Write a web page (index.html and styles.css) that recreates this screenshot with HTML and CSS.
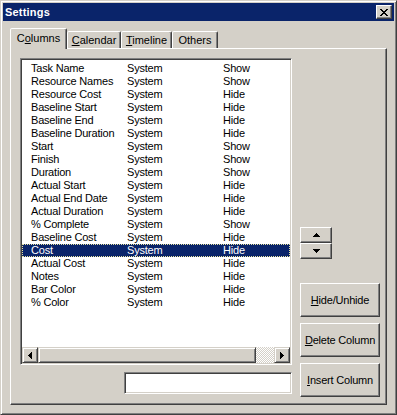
FILE: index.html
```html
<!DOCTYPE html>
<html>
<head>
<meta charset="utf-8">
<link rel="stylesheet" href="styles.css">
</head>
<body>
<div class="window">
  <div class="titlebar">
    <span class="title">Settings</span>
    <div class="close">
      <svg width="8" height="7" viewBox="0 0 8 7" shape-rendering="crispEdges">
        <rect x="0" y="0" width="2" height="1"/><rect x="6" y="0" width="2" height="1"/>
        <rect x="1" y="1" width="2" height="1"/><rect x="5" y="1" width="2" height="1"/>
        <rect x="2" y="2" width="4" height="1"/>
        <rect x="3" y="3" width="2" height="1"/>
        <rect x="2" y="4" width="4" height="1"/>
        <rect x="1" y="5" width="2" height="1"/><rect x="5" y="5" width="2" height="1"/>
        <rect x="0" y="6" width="2" height="1"/><rect x="6" y="6" width="2" height="1"/>
      </svg>
    </div>
  </div>
  <div class="body">
    <div class="tabs">
      <div class="tab tab-active tab-columns">C<u>o</u>lumns</div>
      <div class="tab tab-calendar"><u>C</u>alendar</div>
      <div class="tab tab-timeline"><u>T</u>imeline</div>
      <div class="tab tab-others">Others</div>
    </div>
    <div class="panel">
      <div class="left">
        <div class="list">
          <div class="rows">
            <div class="row"><span>Task Name</span><span>System</span><span>Show</span></div>
            <div class="row"><span>Resource Names</span><span>System</span><span>Show</span></div>
            <div class="row"><span>Resource Cost</span><span>System</span><span>Hide</span></div>
            <div class="row"><span>Baseline Start</span><span>System</span><span>Hide</span></div>
            <div class="row"><span>Baseline End</span><span>System</span><span>Hide</span></div>
            <div class="row"><span>Baseline Duration</span><span>System</span><span>Hide</span></div>
            <div class="row"><span>Start</span><span>System</span><span>Show</span></div>
            <div class="row"><span>Finish</span><span>System</span><span>Show</span></div>
            <div class="row"><span>Duration</span><span>System</span><span>Show</span></div>
            <div class="row"><span>Actual Start</span><span>System</span><span>Hide</span></div>
            <div class="row"><span>Actual End Date</span><span>System</span><span>Hide</span></div>
            <div class="row"><span>Actual Duration</span><span>System</span><span>Hide</span></div>
            <div class="row"><span>% Complete</span><span>System</span><span>Show</span></div>
            <div class="row"><span>Baseline Cost</span><span>System</span><span>Hide</span></div>
            <div class="row row-selected"><span>Cost</span><span>System</span><span>Hide</span></div>
            <div class="row"><span>Actual Cost</span><span>System</span><span>Hide</span></div>
            <div class="row"><span>Notes</span><span>System</span><span>Hide</span></div>
            <div class="row"><span>Bar Color</span><span>System</span><span>Hide</span></div>
            <div class="row"><span>% Color</span><span>System</span><span>Hide</span></div>
          </div>
          <div class="hscroll">
            <div class="sbtn">
              <svg width="4" height="7" viewBox="0 0 4 7" shape-rendering="crispEdges">
                <rect x="0" y="3" width="1" height="1"/><rect x="1" y="2" width="1" height="3"/>
                <rect x="2" y="1" width="1" height="5"/><rect x="3" y="0" width="1" height="7"/>
              </svg>
            </div>
            <div class="thumb"></div>
            <div class="track"></div>
            <div class="sbtn">
              <svg width="4" height="7" viewBox="0 0 4 7" shape-rendering="crispEdges">
                <rect x="3" y="3" width="1" height="1"/><rect x="2" y="2" width="1" height="3"/>
                <rect x="1" y="1" width="1" height="5"/><rect x="0" y="0" width="1" height="7"/>
              </svg>
            </div>
          </div>
        </div>
        <div class="textbox"></div>
      </div>
      <div class="right">
        <div class="updown">
          <div class="btn small">
            <svg width="7" height="4" viewBox="0 0 7 4" shape-rendering="crispEdges">
              <rect x="3" y="0" width="1" height="1"/><rect x="2" y="1" width="3" height="1"/>
              <rect x="1" y="2" width="5" height="1"/><rect x="0" y="3" width="7" height="1"/>
            </svg>
          </div>
          <div class="btn small">
            <svg width="7" height="4" viewBox="0 0 7 4" shape-rendering="crispEdges">
              <rect x="0" y="0" width="7" height="1"/><rect x="1" y="1" width="5" height="1"/>
              <rect x="2" y="2" width="3" height="1"/><rect x="3" y="3" width="1" height="1"/>
            </svg>
          </div>
        </div>
        <div class="btn big first"><span><u>H</u>ide/Unhide</span></div>
        <div class="btn big"><span><u>D</u>elete Column</span></div>
        <div class="btn big"><span><u>I</u>nsert Column</span></div>
      </div>
    </div>
  </div>
</div>
</body>
</html>
```
FILE: styles.css
```css
* { box-sizing: border-box; }
html, body { margin: 0; padding: 0; background: #d4d0c8; }
body {
  font-family: "Liberation Sans", Arial, sans-serif;
  font-size: 11px;
  color: #000;
}
u { text-decoration: underline; text-underline-offset: 1px; }

.window {
  width: 397px;
  height: 415px;
  background: #d4d0c8;
  border: 1px solid;
  border-color: #d4d0c8 #404040 #404040 #d4d0c8;
  box-shadow: inset 1px 1px #fff, inset -1px -1px #808080;
  padding: 2px;
  display: flex;
  flex-direction: column;
}

.titlebar {
  height: 18px;
  background: #0a246a;
  display: flex;
  align-items: center;
  justify-content: space-between;
  padding: 0 2px 0 2px;
  flex: none;
}
.title {
  color: #fff;
  font-weight: bold;
  font-size: 11px;
  letter-spacing: 0.2px;
}
.close {
  width: 16px;
  height: 14px;
  background: #d4d0c8;
  border: 1px solid;
  border-color: #fff #404040 #404040 #fff;
  box-shadow: inset -1px -1px #808080;
  display: flex;
  align-items: center;
  justify-content: center;
  padding-right: 1px;
}
.close svg { display: block; fill: #000; }

.body {
  flex: 1;
  padding: 7px;
  display: flex;
  flex-direction: column;
}

.tabs {
  height: 20px;
  display: flex;
  align-items: flex-end;
  flex: none;
}
.tab {
  height: 17px;
  border: 1px solid;
  border-bottom: none;
  border-color: #fff #404040 transparent #fff;
  box-shadow: inset -1px 0 #808080;
  border-radius: 2px 2px 0 0;
  background: #d4d0c8;
  padding-top: 2px;
  line-height: 13px;
  text-align: center;
  white-space: nowrap;
}
.tab-active {
  height: 21px;
  margin-bottom: -1px;
  position: relative;
  z-index: 1;
  padding-top: 3px;
}
.tab-columns { width: 57px; }
.tab-calendar { width: 54px; }
.tab-timeline { width: 51px; }
.tab-others { width: 46px; }

.panel {
  flex: 1;
  border: 1px solid;
  border-color: #fff #404040 #404040 #fff;
  box-shadow: inset -1px -1px #808080;
  padding: 9px 6px 0 9px;
  display: flex;
  gap: 8px;
}

.left {
  width: 272px;
  display: flex;
  flex-direction: column;
}
.list {
  height: 307px;
  background: #fff;
  border: 1px solid;
  border-color: #808080 #fff #fff #808080;
  box-shadow: inset 1px 1px #404040, inset -1px -1px #d4d0c8;
  padding: 1px;
  display: flex;
  flex-direction: column;
}
.rows {
  flex: 1;
  padding-top: 2px;
  overflow: hidden;
}
.row {
  height: 13px;
  line-height: 13px;
  display: grid;
  grid-template-columns: 96px 96px 1fr;
  padding-left: 9px;
  white-space: nowrap;
  letter-spacing: -0.2px;
}
.row-selected {
  background: #0a246a;
  color: #fff;
  outline: 1px dotted #e8e4a0;
  outline-offset: -1px;
}

.hscroll {
  height: 16px;
  display: flex;
  flex: none;
}
.sbtn, .thumb {
  background: #d4d0c8;
  border: 1px solid;
  border-color: #d4d0c8 #404040 #404040 #d4d0c8;
  box-shadow: inset 1px 1px #fff, inset -1px -1px #808080;
}
.sbtn {
  width: 16px;
  display: flex;
  align-items: center;
  justify-content: center;
}
.sbtn svg { display: block; fill: #000; }
.thumb { width: 218px; }
.track {
  flex: 1;
  background: repeating-conic-gradient(#fff 0 25%, #d4d0c8 0 50%) 0 0 / 2px 2px;
}

.textbox {
  margin-top: 7px;
  align-self: flex-end;
  width: 168px;
  height: 22px;
  background: #fff;
  border: 1px solid;
  border-color: #808080 #fff #fff #808080;
  box-shadow: inset 1px 1px #404040, inset -1px -1px #d4d0c8;
}

.right {
  width: 80px;
  display: flex;
  flex-direction: column;
}
.btn {
  background: #d4d0c8;
  border: 1px solid;
  border-color: #fff #404040 #404040 #fff;
  box-shadow: inset -1px -1px #808080;
  display: flex;
  align-items: center;
  justify-content: center;
}
.btn svg { display: block; fill: #000; }
.updown {
  margin-top: 169px;
  display: flex;
  flex-direction: column;
}
.small {
  width: 32px;
  height: 16px;
}
.big {
  height: 34px;
  margin-top: 6px;
  white-space: nowrap;
  letter-spacing: -0.2px;
}
.big.first { margin-top: 24px; }
```
